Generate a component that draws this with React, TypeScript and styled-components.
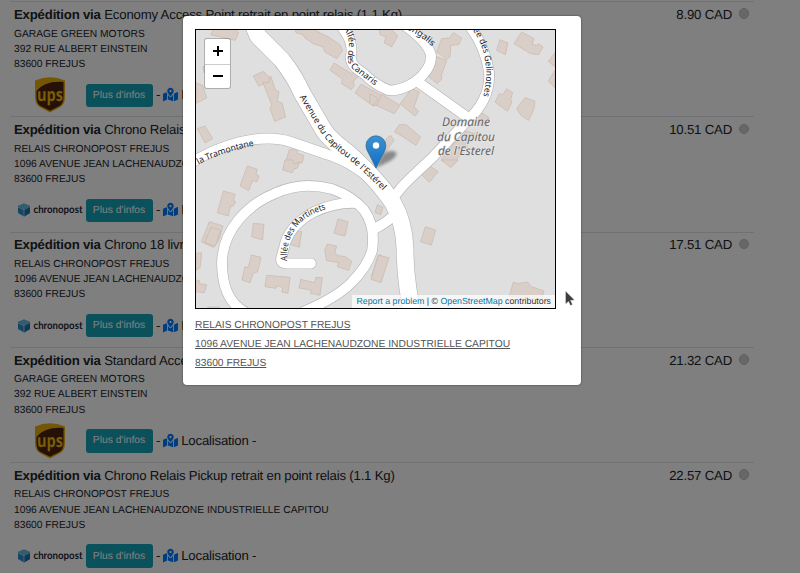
import React from 'react';
import styled, { createGlobalStyle } from 'styled-components';
import { FaMapMarkedAlt } from 'react-icons/fa';

const GlobalStyle = createGlobalStyle`
  * { box-sizing: border-box; }
  html, body { margin: 0; height: 573px; overflow: hidden; background: #fff; }
  body {
    font-family: "Liberation Sans", Arial, sans-serif;
    color: #212529;
    text-rendering: geometricPrecision;
  }
`;

const Page = styled.main`
  position: relative;
  width: 800px;
  height: 573px;
  overflow: hidden;
`;

const RateList = styled.section`
  width: 744px;
  margin-left: 10px;
  padding-top: 1.2px;
`;

const RateRow = styled.article`
  display: flex;
  justify-content: space-between;
  align-items: flex-start;
  height: 115.2px;
  padding: 2.8px 5px 0 4px;
  border-top: 1px solid #dee2e6;
`;

const RateTitle = styled.div`
  font-size: 13.2px;
  letter-spacing: -0.19px;
  line-height: 20px;
  white-space: nowrap;
`;

const Address = styled.div`
  padding-top: 1.7px;
  font-size: 10.26px;
  line-height: 15.2px;
  white-space: nowrap;
`;

const Actions = styled.div`
  display: flex;
  align-items: center;
  height: 36px;
  margin-top: 5px;
  font-size: 13.2px;
  letter-spacing: -0.19px;
  white-space: pre;
`;

const LogoSlot = styled.div`
  display: flex;
  justify-content: center;
  width: 71.5px;
  letter-spacing: 0;
  svg { display: block; overflow: visible; }
`;

const InfoButton = styled.button`
  width: 67px;
  height: 23.5px;
  padding: 0;
  border: 0;
  border-radius: 3px;
  background: #17a2b8;
  color: #fff;
  font-family: "Liberation Sans", Arial, sans-serif;
  font-size: 10.3px;
  text-rendering: geometricPrecision;
`;

const Locate = styled.span`
  display: flex;
  align-items: center;
  margin: -1px 0 0 3.5px;
  svg { margin: 0 3px; color: #007bff; }
`;

const PriceBox = styled.div`
  display: flex;
  align-items: flex-start;
  gap: 6.5px;
  font-size: 13.2px;
  letter-spacing: -0.19px;
  line-height: 20px;
`;

const Radio = styled.span`
  width: 10.5px;
  height: 10.5px;
  margin-top: 3.5px;
  border-radius: 50%;
  border: 1.5px solid #bdbdbd;
  background: #cfcfcf;
`;

const Backdrop = styled.div`
  position: absolute;
  inset: 0;
  padding: 16px 0 0 182.5px;
  background: rgba(0, 0, 0, 0.5);
`;

const Dialog = styled.div`
  width: 398.5px;
  height: 369px;
  padding: 13px 12.5px;
  border-radius: 4px;
  background: #fff;
  box-shadow: 0 0 2px rgba(0, 0, 0, 0.6);
`;

const MapFrame = styled.div`
  position: relative;
  width: 361px;
  height: 280px;
  border: 1px solid #000;
  overflow: hidden;
  > svg { display: block; }
`;

const ZoomBar = styled.div`
  position: absolute;
  left: 8px;
  top: 8px;
  width: 27px;
  border: 1.5px solid rgba(0, 0, 0, 0.22);
  border-radius: 3px;
  background: #fff;
  background-clip: padding-box;
`;

const ZoomButton = styled.button`
  display: flex;
  align-items: center;
  justify-content: center;
  width: 100%;
  height: 24.5px;
  padding: 0;
  border: 0;
  background: transparent;
  & + & { border-top: 1px solid #ccc; }
`;

const Attribution = styled.div`
  position: absolute;
  right: 0;
  bottom: 0;
  height: 13px;
  padding: 0 4px;
  background: rgba(255, 255, 255, 0.7);
  color: #333;
  font-size: 8.8px;
  line-height: 13px;
  white-space: nowrap;
  a { color: #0078a8; }
`;

const PickupAddress = styled.div`
  padding-top: 6.5px;
  color: #555;
  font-size: 10.27px;
  line-height: 19.2px;
  white-space: nowrap;
  text-decoration: underline;
`;

const Pointer = styled.svg`
  position: absolute;
  left: 565px;
  top: 290px;
`;

const UpsLogo = () => (
  <svg width="30" height="36" viewBox="0 0 30 36">
    <path d="M0 3.5Q15-3 30 3.500V20q0 8-6 10.800L15 35.500l-9-4.700Q0 28 0 20Z" fill="#e9ae0c" />
    <path d="M1.500 14C8 6.500 17 4 28.500 5V20c0 7-3.500 8.800-6 10L15 33.800 7.500 30C5 28.800 1.500 27 1.500 20Z" fill="#4b2310" />
    <text x="15" y="24" textAnchor="middle" textLength="26" lengthAdjust="spacingAndGlyphs" fontFamily="Open Sans" fontWeight="700" fontSize="18" fill="#f0b90e">ups</text>
  </svg>
);

const ChronopostLogo = () => (
  <svg width="66" height="16" viewBox="0 0 66 16">
    <path d="m1 4 6-2.500L13 4v7l-6 3.500L1 11Z" fill="#2a8fc8" />
    <path d="m1 4 6-2.500L13 4 7 7Z" fill="#6bbbe4" />
    <path d="M7 7l6-3v7l-6 3.500Z" fill="#1872a8" />
    <path d="m1 5 6 2.500L13 4.500M7 7v7" fill="none" stroke="#d9eef8" strokeWidth=".7" />
    <text x="16.500" y="11" textLength="49" lengthAdjust="spacingAndGlyphs" fontFamily="Lato" fontWeight="700" fontSize="10.500" fill="#1d2733">chronopost</text>
  </svg>
);

const avenue = 'M252 22L258 36L282 60Q295 77 302 93L323 129Q328 138 348 153Q378 180 393 203Q404 222 405 248Q405 268 408 289L412 312';
const lanes = [
  'M188 165Q210 150 240 142Q270 135 291 142L326 154Q356 163 381 189',
  'M245 312Q222 300 222 262C223 228 250 203 276 193Q302 181 332 189Q352 196 364 210Q376 227 372 251Q367 267 352 282Q338 297 303 312',
  'M356 203Q335 202 314 212Q288 226 284 248L281 259Q281 264 288 263.500H311',
  'M374 229Q388 222 396 213',
  'M393 198L401 188Q408 180 432 158L467 121Q491 99 489 72Q485 45 468 24',
  'M418 82L467 117',
  'M339 24Q354 40 351 55Q349 65 363 73Q375 85 388 90Q399 92 415 82Q432 69 431 55Q428 42 404 25',
];

const buildingGroups = [
  {
    origin: 'translate(190 22)',
    shapes: [
      '62,38 70,22 135,22 146,32 136,55', '315,22 370,22 415,45 450,68 458,85 440,110 405,90 400,75 370,65 345,48 338,38 318,32',
      '190,162 220,148 240,168 236,182 206,192', '218,180 236,182 242,162 257,205 267,209 262,238 276,242 287,285 254,298 240,260 245,248',
      '420,145 432,123 485,155 492,150 508,160 490,178 493,190 484,203 455,185 457,170', '495,213 513,187 575,220 575,245 550,252',
      '22,320 45,312 68,350 45,363', '18,183 38,190 50,228 18,244', '38,135 55,125 62,150 43,152',
      '280,440 298,383 320,380 323,395 342,400 336,423 322,420 318,440',
    ],
  },
  {
    origin: 'translate(370 22)',
    shapes: [
      '28,22 65,22 83,42 65,75 42,62 48,45 30,38', '200,90 215,50 238,48 250,32 275,48 266,68 242,70 240,105 230,112 210,96',
      '180,145 196,102 230,115 214,160 216,170 202,185 178,166', '380,85 390,53 414,63 406,98',
      '432,65 455,30 492,50 486,67 500,70 506,65 519,75 506,98 482,95', '555,92 535,118 555,135', '555,145 535,177 555,198',
      '375,240 388,215 398,218 410,200 428,212 422,232 426,240 412,268', '440,260 465,227 495,238 492,260 476,295 453,280',
      '0,215 25,230 10,250 0,245', '19,250 36,217 90,250 73,275', '90,245 110,220 125,200 148,210 132,255 146,268 135,282',
      '73,330 88,308 108,308 152,345 138,370 100,345', '0,375 40,358 62,340 72,355 42,397',
      '310,290 332,270 357,287 337,315', '215,410 240,380 278,325 315,335 285,382 242,435',
    ],
  },
  {
    origin: 'translate(190 160)',
    shapes: [
      '150,77 172,18 202,28 198,43 207,48 201,65 188,62 176,92', '82,158 100,93 136,103 130,120 137,125 130,138 122,138 115,168',
      '34,245 58,185 99,198 85,245 70,262', '44,247 63,202 92,211 75,259', '185,230 190,190 222,193 218,240',
      '305,210 335,215 328,262 298,252', '432,220 444,177 474,185 465,228', '404,270 412,252 440,258 434,280 446,287 466,290 485,304 476,331 442,320 446,308 410,302',
      '156,360 165,320 175,322 184,285 213,292 203,335 190,340 180,368', '225,380 230,346 300,352 294,400 276,396 278,382 262,377 258,385',
      '327,384 332,358 374,368 378,352 397,353 390,406 362,400 362,390', '18,280 35,278 30,324 18,330', '18,360 28,362 28,371 50,374 43,398 18,395',
      '278,30 285,0 308,0 312,12 328,8 323,24 312,26 307,38', '53,441 88,441 86,450 53,450', '544,350 565,285 575,285 575,365',
    ],
  },
  {
    origin: 'translate(370 160)',
    shapes: [
      '15,158 22,134 39,142 32,164', '152,245 166,200 197,210 184,255', '3,358 25,286 57,293 33,368', '153,42 176,15 204,35 178,67',
      '213,0 264,0 243,23', '418,408 430,366 444,371 455,369 473,366 484,380 522,393 515,420',
    ],
  },
];

const StreetMap = () => (
  <svg width="359" height="278" viewBox="196 30 359 278">
    <defs>
      <path id="labelTramontane" d="M192.500 168Q214 154 255 145.500Q272 143 283 145" />
      <path id="labelAvenue" d="M299.500 97Q311 116 320 131Q329 145 346 157Q366 173 389 197" />
      <path id="labelMartinets" d="M287 261Q286 239 299 224Q308 214 330 208" />
      <path id="labelCanaris" d="M343 28.500Q351 38 348.500 52Q345 65 358 73L386 94" />
      <path id="labelBengalis" d="M401 27Q420 34 438 52" />
      <path id="labelGelinottes" d="M466.500 22.500Q482 39 485 60Q489 80 480 108" />
      <linearGradient id="pin" x1="0" y1="0" x2="0" y2="1">
        <stop stopColor="#3c91cf" /><stop offset="1" stopColor="#126fc6" />
      </linearGradient>
      <filter id="soft" x="-30%" y="-30%" width="160%" height="160%"><feGaussianBlur stdDeviation="1.8" /></filter>
    </defs>
    <rect x="196" y="30" width="359" height="278" fill="#dfdfdf" />
    {buildingGroups.map((group) => (
      <g key={group.origin} transform={`${group.origin} scale(.33333)`} fill="#d9cfc8" stroke="#c9b9ad" strokeWidth="2.200">
        {group.shapes.map((points) => <polygon key={points} points={points} />)}
      </g>
    ))}
    <g fill="none" strokeLinecap="round" strokeLinejoin="round">
      <g stroke="#b4b4b4">
        <path d={avenue} strokeWidth="18" />
        {lanes.map((d) => <path key={d} d={d} strokeWidth="11" />)}
      </g>
      <g stroke="#fff">
        <path d={avenue} strokeWidth="16.800" />
        {lanes.map((d) => <path key={d} d={d} strokeWidth="9.800" />)}
      </g>
    </g>
    <g fontFamily="Noto Sans" fontSize="8.800" fill="#222">
      <text><textPath href="#labelTramontane" textLength="66" lengthAdjust="spacingAndGlyphs">e la Tramontane</textPath></text>
      <text><textPath href="#labelAvenue" textLength="127" lengthAdjust="spacingAndGlyphs">Avenue du Capitou de l'Estérel</textPath></text>
      <text><textPath href="#labelMartinets" textLength="71" lengthAdjust="spacingAndGlyphs">Allée des Martinets</textPath></text>
      <text><textPath href="#labelCanaris" textLength="71" lengthAdjust="spacingAndGlyphs">Allée des Canaris</textPath></text>
      <text><textPath href="#labelBengalis" textLength="37" lengthAdjust="spacingAndGlyphs">Bengalis</textPath></text>
      <text><textPath href="#labelGelinottes" textLength="79" lengthAdjust="spacingAndGlyphs">Allée des Gelinottes</textPath></text>
    </g>
    <g fontFamily="Noto Sans" fontStyle="italic" fontSize="12" fill="#666" stroke="#e6e6e6" strokeWidth="1.500" paintOrder="stroke" textAnchor="middle">
      <text x="466" y="126" textLength="48" lengthAdjust="spacingAndGlyphs">Domaine</text>
      <text x="466" y="140.500" textLength="58" lengthAdjust="spacingAndGlyphs">du Capitou</text>
      <text x="466" y="154.500" textLength="56" lengthAdjust="spacingAndGlyphs">de l'Esterel</text>
    </g>
    <path d="M376 168L382 155Q389 149 396 152Q398 157 388 162Z" fill="#000" opacity=".38" filter="url(#soft)" />
    <path d="M376 168L368 152Q366 149 366 145.500A9.900 9.700 0 0 1 385.800 145.500Q385.800 149 384 152Z" fill="url(#pin)" stroke="#2e6c97" strokeWidth=".8" />
    <circle cx="376" cy="145.500" r="3.200" fill="#fff" />
  </svg>
);

const garage = ['GARAGE GREEN MOTORS', '392 RUE ALBERT EINSTEIN', '83600 FREJUS'];
const relay = ['RELAIS CHRONOPOST FREJUS', '1096 AVENUE JEAN LACHENAUDZONE INDUSTRIELLE CAPITOU', '83600 FREJUS'];
const rates = [
  { name: 'Economy Access Point retrait en point relais (1.1 Kg)', price: '8.90', ups: true },
  { name: 'Chrono Relais Pickup retrait en point relais (1.1 Kg)', price: '10.51', ups: false },
  { name: 'Chrono 18 livraison en point relais (1.1 Kg)', price: '17.51', ups: false },
  { name: 'Standard Access Point retrait (1.1 Kg)', price: '21.32', ups: true },
  { name: 'Chrono Relais Pickup retrait en point relais (1.1 Kg)', price: '22.57', ups: false },
];

export default function App() {
  return (
    <Page>
      <GlobalStyle />
      <RateList>
        {rates.map((rate) => (
          <RateRow key={rate.price}>
            <div>
              <RateTitle><b>Expédition via</b> {rate.name}</RateTitle>
              <Address>{(rate.ups ? garage : relay).map((line) => <div key={line}>{line}</div>)}</Address>
              <Actions>
                <LogoSlot>{rate.ups ? <UpsLogo /> : <ChronopostLogo />}</LogoSlot>
                <InfoButton>Plus d'infos</InfoButton>
                <Locate>-<FaMapMarkedAlt size={15} />Localisation -</Locate>
              </Actions>
            </div>
            <PriceBox>{rate.price} CAD<Radio /></PriceBox>
          </RateRow>
        ))}
      </RateList>
      <Backdrop>
        <Dialog>
          <MapFrame>
            <StreetMap />
            <ZoomBar>
              <ZoomButton aria-label="Zoom in"><svg width="10" height="10"><path d="M0 5h10M5 0v10" stroke="#000" strokeWidth="2" /></svg></ZoomButton>
              <ZoomButton aria-label="Zoom out"><svg width="10" height="10"><path d="M0 5h10" stroke="#000" strokeWidth="2" /></svg></ZoomButton>
            </ZoomBar>
            <Attribution><a>Report a problem</a> | © <a>OpenStreetMap</a> contributors</Attribution>
          </MapFrame>
          <PickupAddress>{relay.map((line) => <div key={line}>{line}</div>)}</PickupAddress>
        </Dialog>
      </Backdrop>
      <Pointer width="11" height="17"><path d="M.5 1v13l3-2.500 2 4 2-1-2-4L9.500 10Z" fill="#3d3d3d" stroke="#eee" strokeWidth=".4" /></Pointer>
    </Page>
  );
}
